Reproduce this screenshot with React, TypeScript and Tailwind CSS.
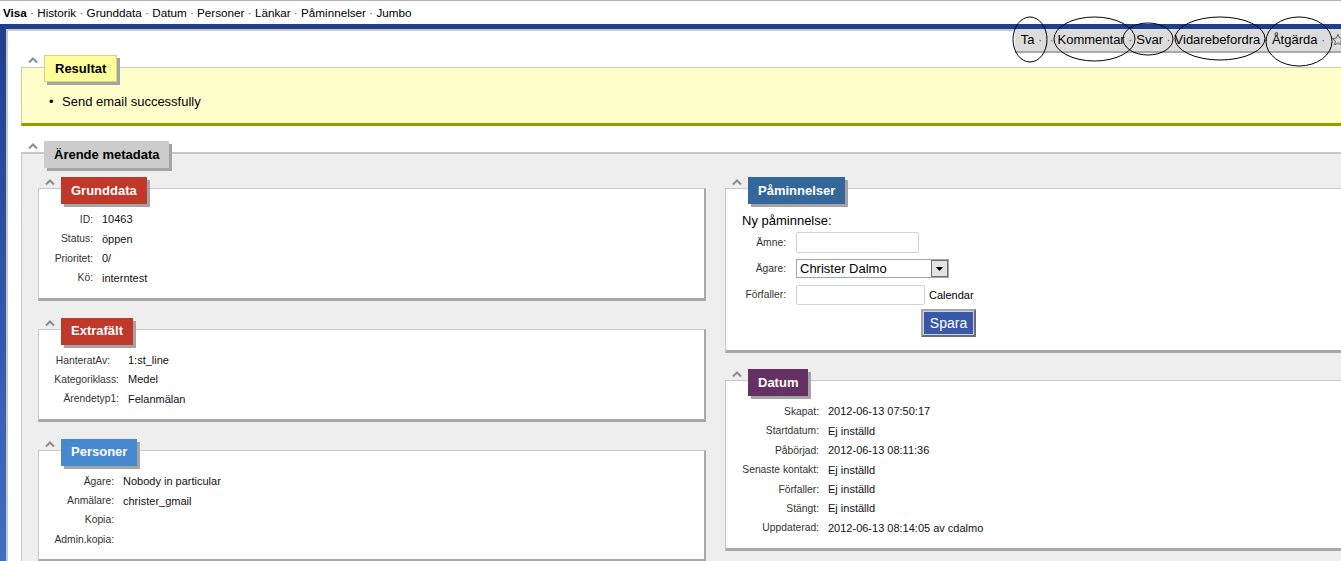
import React from 'react';

const navItems = ['Historik', 'Grunddata', 'Datum', 'Personer', 'Länkar', 'Påminnelser', 'Jumbo'];

function Caret() {
  return (
    <svg width="10" height="6" viewBox="0 0 10 6" className="mt-[2px] shrink-0">
      <path d="M1 5.5 L5 1.5 L9 5.5" fill="none" stroke="#8c8c8c" strokeWidth="2" />
    </svg>
  );
}

function Header({ label, tabClass }: { label: string; tabClass: string }) {
  return (
    <div className="relative z-10 flex items-start gap-[6px] pl-[7px]">
      <Caret />
      <div
        className={`flex h-[27px] items-center px-[10px] text-[13px] font-bold shadow-[3px_3px_0_#a4a4a4] ${tabClass}`}
      >
        {label}
      </div>
    </div>
  );
}

type Row = { label: string; value?: string; extra?: string };

function Fields({ rows, labelW }: { rows: Row[]; labelW: string }) {
  return (
    <div>
      {rows.map((r) => (
        <div key={r.label} className="flex h-[19.4px] items-center whitespace-nowrap">
          <span className={`${labelW} shrink-0 text-right text-[10.3px] text-[#333] ${r.extra ?? ''}`}>
            {r.label}
          </span>
          <span className="ml-[9px] text-[11px] text-[#111]">{r.value}</span>
        </div>
      ))}
    </div>
  );
}

function Box({ label, tabClass, children, pad = 'pt-[21px] pb-[10px]' }: {
  label: string;
  tabClass: string;
  children: React.ReactNode;
  pad?: string;
}) {
  return (
    <div>
      <Header label={label} tabClass={tabClass} />
      <div
        className={`-mt-[16px] border-t border-l border-r-2 border-b-[3px] border-[#c8c8c8] border-r-[#a8a8a8] border-b-[#a8a8a8] bg-white ${pad}`}
      >
        {children}
      </div>
    </div>
  );
}

function Star() {
  return (
    <svg width="14" height="14" viewBox="0 0 24 24" className="shrink-0">
      <path
        d="M12 2.5l2.9 6.2 6.6.7-5 4.5 1.4 6.6L12 17.2l-5.9 3.3 1.4-6.6-5-4.5 6.6-.7z"
        fill="none"
        stroke="#555"
        strokeWidth="1.6"
        strokeLinejoin="round"
      />
    </svg>
  );
}

const actions = ['Ta', '', 'Kommentar', 'Svar', 'Vidarebefordra', 'Åtgärda'];

export default function App() {
  return (
    <div className="relative h-[561px] w-[1341px] overflow-hidden bg-white font-['Liberation_Sans',Arial,sans-serif] text-black">
      {/* top nav */}
      <div className="flex h-[24px] items-center border-t border-[#b4b4b4] pl-[3px] text-[11.7px] whitespace-nowrap">
        <span className="font-bold">Visa</span>
        {navItems.map((n) => (
          <React.Fragment key={n}>
            <span className="text-[#555]">&nbsp;·&nbsp;</span>
            <span>{n}</span>
          </React.Fragment>
        ))}
      </div>

      <div className="h-[5px] bg-[#1f3f8d]" />
      <div className="flex">
        <div className="w-[6px] shrink-0 bg-gradient-to-b from-[#1f3f8d] to-[#4470bf]" />
        <div className="min-w-0 flex-1 border-t-2 border-l-2 border-[#c8c8c8] pl-[13px]">
          {/* action bar */}
          <div className="-mt-[2px] -mr-[6px] flex justify-end">
            <div className="flex h-[24px] items-center gap-[2px] border-b-2 border-[#a8a8a8] bg-[#dcdcdc] pl-[6px] pr-[2px] text-[13px] whitespace-nowrap">
              <span>
                {actions.map((a, i) => (
                  <React.Fragment key={i}>
                    {a}
                    <span className="text-[#666]">&nbsp;·&nbsp;</span>
                  </React.Fragment>
                ))}
              </span>
              <Star />
            </div>
          </div>

          {/* Resultat */}
          <div className="mt-[2px] w-[1389px]">
            <Header label="Resultat" tabClass="border border-[#d2d294] bg-[#ffff99] text-black" />
            <div className="-mt-[15px] border-t border-l border-b-[3px] border-[#cdcda4] border-b-[#999900] bg-[#ffffcc] pt-[26px] pb-[14px] pl-[27px]">
              <div className="flex text-[13px] leading-[15px]">
                <span className="w-[13px]">•</span>
                <span>Send email successfully</span>
              </div>
            </div>
          </div>

          {/* Ärende metadata */}
          <div className="mt-[15px] w-[1389px]">
            <Header label="Ärende metadata" tabClass="bg-[#cccccc] text-black" />
            <div className="-mt-[16px] border-t-2 border-l border-[#c8c8c8] bg-[#eeeeee] pt-[23px] pl-[16px] pb-[20px]">
              <div className="grid grid-cols-[668px_668px] gap-x-[19px]">
                <div className="flex flex-col gap-[17px]">
                  <Box label="Grunddata" tabClass="bg-[#c0382a] text-white">
                    <Fields
                      labelW="w-[54px]"
                      rows={[
                        { label: 'ID:', value: '10463' },
                        { label: 'Status:', value: 'öppen' },
                        { label: 'Prioritet:', value: '0/' },
                        { label: 'Kö:', value: 'interntest' },
                      ]}
                    />
                  </Box>
                  <Box label="Extrafält" tabClass="bg-[#c0382a] text-white">
                    <Fields
                      labelW="w-[80px]"
                      rows={[
                        { label: 'HanteratAv:', value: '1:st_line', extra: 'pr-[9px]' },
                        { label: 'Kategoriklass:', value: 'Medel' },
                        { label: 'Ärendetyp1:', value: 'Felanmälan' },
                      ]}
                    />
                  </Box>
                  <Box label="Personer" tabClass="bg-[#4689cf] text-white">
                    <Fields
                      labelW="w-[75px]"
                      rows={[
                        { label: 'Ägare:', value: 'Nobody in particular' },
                        { label: 'Anmälare:', value: 'christer_gmail' },
                        { label: 'Kopia:' },
                        { label: 'Admin.kopia:' },
                      ]}
                    />
                  </Box>
                </div>

                <div className="flex flex-col gap-[16px]">
                  <Box label="Påminnelser" tabClass="bg-[#336699] text-white" pad="pt-[24px] pb-[13px]">
                    <div className="pl-[16px] text-[13px] leading-[15px]">Ny påminnelse:</div>
                    <div className="mt-[4px] flex items-center">
                      <span className="w-[60px] text-right text-[10.3px] text-[#333]">Ämne:</span>
                      <div className="ml-[10px] h-[21px] w-[123px] rounded-[2px] border border-[#cfd3db] bg-white" />
                    </div>
                    <div className="mt-[6px] flex items-center">
                      <span className="w-[60px] text-right text-[10.3px] text-[#333]">Ägare:</span>
                      <div className="ml-[10px] flex h-[19px] w-[153px] items-center border border-[#a5a5a5] bg-white">
                        <span className="flex-1 pl-[3px] text-[13px] leading-[15px]">Christer Dalmo</span>
                        <span className="flex h-full w-[17px] items-center justify-center border border-[#6e6e6e] bg-[#e3e3e3]">
                          <svg width="7" height="4" viewBox="0 0 7 4">
                            <path d="M0 0h7L3.5 4z" fill="#000" />
                          </svg>
                        </span>
                      </div>
                    </div>
                    <div className="mt-[7px] flex items-center">
                      <span className="w-[60px] text-right text-[10.3px] text-[#333]">Förfaller:</span>
                      <div className="ml-[10px] h-[20px] w-[129px] rounded-[2px] border border-[#cfd3db] bg-white" />
                      <span className="ml-[4px] text-[11px]">Calendar</span>
                    </div>
                    <div className="mt-[4px] pl-[195px]">
                      <button className="h-[28px] w-[55px] border-2 border-[#a6a6a6] border-r-[#6c6c6c] border-b-[#6c6c6c] bg-[#3858a8] text-[14px] text-white shadow-[inset_0_0_0_1px_#c9d2ea]">
                        Spara
                      </button>
                    </div>
                  </Box>
                  <Box label="Datum" tabClass="bg-[#633262] text-white">
                    <Fields
                      labelW="w-[93px]"
                      rows={[
                        { label: 'Skapat:', value: '2012-06-13 07:50:17' },
                        { label: 'Startdatum:', value: 'Ej inställd' },
                        { label: 'Påbörjad:', value: '2012-06-13 08:11:36' },
                        { label: 'Senaste kontakt:', value: 'Ej inställd' },
                        { label: 'Förfaller:', value: 'Ej inställd' },
                        { label: 'Stängt:', value: 'Ej inställd' },
                        { label: 'Uppdaterad:', value: '2012-06-13 08:14:05 av cdalmo' },
                      ]}
                    />
                  </Box>
                </div>
              </div>
            </div>
          </div>
        </div>
      </div>

      {/* hand-drawn annotation circles */}
      <svg className="pointer-events-none absolute inset-0" width="1341" height="561">
        <g fill="none" stroke="#000" strokeWidth="1">
          <ellipse cx="1030" cy="39.5" rx="17" ry="22.5" />
          <ellipse cx="1094.5" cy="39" rx="40.5" ry="22" />
          <ellipse cx="1148" cy="39" rx="25" ry="16" />
          <ellipse cx="1220" cy="38.5" rx="45" ry="21.5" />
          <ellipse cx="1299" cy="41.5" rx="33" ry="24.5" />
        </g>
      </svg>
    </div>
  );
}
